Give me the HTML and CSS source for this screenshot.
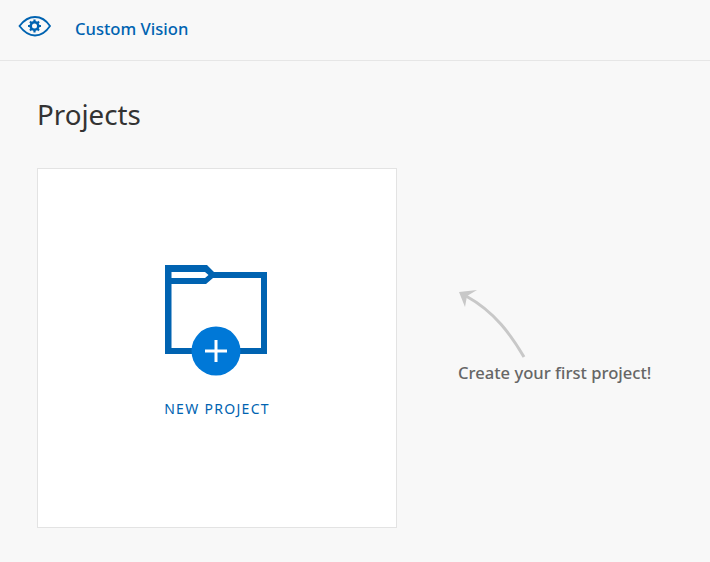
FILE: index.html
```html
<!DOCTYPE html>
<html lang="en">
<head>
<meta charset="utf-8">
<title>Custom Vision</title>
<link rel="stylesheet" href="styles.css">
</head>
<body>
<header class="topbar">
  <svg class="logo" width="34" height="24" viewBox="0 0 34 24" fill="none" stroke="#0063b1">
    <path d="M1.500 12 C6 6 11 3 17 3 C23 3 28 6 32 12 C28 18 23 21.500 17 21.500 C11 21.500 6 18 1.500 12 Z" stroke-width="1.800"/>
    <circle cx="16.500" cy="12" r="3.800" stroke-width="2.600"/>
    <path d="M16.500 5.500V8M16.500 16V18.500M10 12H12.500M20.500 12H23M12 7.500L13.700 9.200M19.300 14.800L21 16.500M21 7.500L19.300 9.200M13.700 14.800L12 16.500" stroke-width="2.200"/>
  </svg>
  <span class="brand">Custom Vision</span>
</header>
<main class="content">
  <h1 class="title">Projects</h1>
  <div class="row">
    <div class="card">
      <svg class="folder" width="104" height="112" viewBox="0 0 104 112">
        <path fill-rule="evenodd" fill="#0063b1" d="M0 0H42L49 7H102V89H0Z M6.500 7H40L43.500 10L40 13H6.500Z M6.500 19H41L48 13H96V83H6.500Z"/>
        <circle cx="51" cy="86" r="24.500" fill="#0078d7"/>
        <path d="M51 75V97M40 86H62" stroke="#fff" stroke-width="3" fill="none"/>
      </svg>
      <div class="label">NEW PROJECT</div>
    </div>
    <div class="hint">
      <svg class="arrow" width="70" height="72" viewBox="0 0 70 72" fill="none">
        <path d="M66 68 C53 46 37 23 8 7" stroke="#c8c8c8" stroke-width="3"/>
        <path d="M1 3 L19 1 L9 7 L7 18 Z" fill="#c8c8c8"/>
      </svg>
      <div class="hint-text">Create your first project!</div>
    </div>
  </div>
</main>
</body>
</html>
```

FILE: styles.css
```css
* { box-sizing: border-box; }
html, body { margin: 0; height: 100%; }
body {
  background: #f8f8f8;
  font-family: "Noto Sans", "Open Sans", sans-serif;
  overflow: hidden;
}
.topbar {
  height: 61px;
  border-bottom: 1px solid #e6e6e6;
  display: flex;
  align-items: center;
  padding: 0 0 4px 18px;
}
.logo { flex: none; margin-bottom: 4px; }
.brand {
  margin-left: 23px;
  color: #0063b1;
  font-size: 16.600px;
  font-weight: 500;
}
.content { padding: 0 37px; }
.title {
  margin: 33px 0 0;
  height: 74px;
  font-size: 27.700px;
  line-height: 40px;
  font-weight: 400;
  color: #333;
}
.row { display: flex; align-items: flex-start; }
.card {
  width: 360px;
  height: 360px;
  flex: none;
  background: #fff;
  border: 1px solid #e3e3e3;
  display: flex;
  flex-direction: column;
  align-items: center;
  padding-top: 96px;
}
.folder { display: block; }
.label {
  margin-top: 22px;
  color: #0063b1;
  font-size: 14px;
  line-height: 20px;
  letter-spacing: 1.300px;
  font-weight: 400;
}
.hint {
  margin: 121px 0 0 61px;
  display: flex;
  flex-direction: column;
  align-items: flex-start;
}
.arrow { display: block; }
.hint-text {
  margin-top: 0;
  color: #666;
  font-size: 16.600px;
  line-height: 24px;
  font-weight: 500;
  white-space: nowrap;
}
```
